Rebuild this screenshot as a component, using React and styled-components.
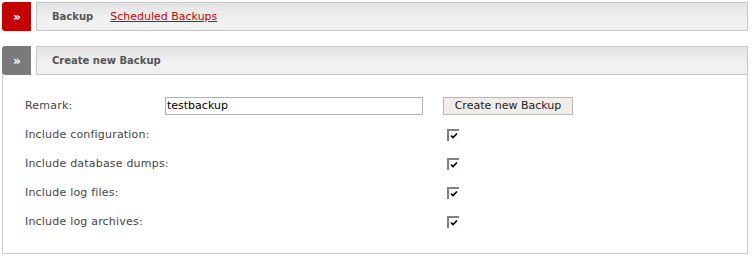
import React from 'react';
import styled, { createGlobalStyle } from 'styled-components';

const Global = createGlobalStyle`
    body {
        margin: 0;
        background: #fff;
        font-family: 'DejaVu Sans', Verdana, sans-serif;
        font-size: 11px;
        color: #444;
    }
`;

const Page = styled.div`
    display: flex;
    flex-direction: column;
    gap: 15px;
    padding: 2px 8px 0 2px;
    width: 746px;
`;

const Section = styled.div`
    display: flex;
    flex-direction: column;
`;

const Header = styled.div`
    display: flex;
    gap: 5px;
    height: 29px;
`;

const Tab = styled.div`
    width: 29px;
    height: 29px;
    flex: none;
    display: flex;
    align-items: center;
    justify-content: center;
    background: ${props => props.color};
    border-radius: 3px 0 0 3px;
    color: #fff;
    font-weight: bold;
    font-size: 12px;
    letter-spacing: -1px;
`;

const Bar = styled.div`
    flex: 1;
    display: flex;
    align-items: center;
    gap: 17px;
    padding-left: 15px;
    border: 1px solid #c8c8c8;
    background: linear-gradient(#e2e2e2, #f1f1f1 60%, #f0f0f0);
    font-weight: bold;
    font-size: 10px;
    color: #555;
`;

const TabLink = styled.a`
    color: #cc0000;
    font-weight: normal;
    font-size: 11px;
    text-decoration: underline;
`;

const Body = styled.div`
    border: 1px solid #cccccc;
    border-top: none;
    height: 179px;
    padding: 16px 0 0 22px;
    box-sizing: border-box;
`;

const Form = styled.div`
    display: grid;
    grid-template-columns: 140px 278px auto;
    grid-auto-rows: 29px;
    align-items: center;
`;

const Label = styled.span`
    color: #444;
    letter-spacing: 0.2px;
    white-space: nowrap;
`;

const Input = styled.input`
    width: 258px;
    height: 18px;
    box-sizing: border-box;
    border: 1px solid #b0b0b0;
    padding: 0 1px;
    font: 11px 'DejaVu Sans', Verdana, sans-serif;
    color: #000;
    outline: none;
`;

const Button = styled.button`
    justify-self: start;
    width: 130px;
    height: 18px;
    padding: 0;
    border: 1px solid #b8b8b8;
    background: #f0ede9;
    font: 11px 'DejaVu Sans', Verdana, sans-serif;
    color: #222;
`;

const Check = styled.span`
    justify-self: start;
    margin-left: 4px;
    width: 12px;
    height: 12px;
    box-sizing: border-box;
    border-top: 2px solid #808080;
    border-left: 2px solid #808080;
    background: #fbfbfb;
    display: flex;
    align-items: center;
    justify-content: center;
`;

const Checked = () => <Check>
    <svg width="8" height="7" viewBox="0 0 8 7">
        <path d="M1 3.5 L3 5.5 L7 1.5" stroke="#000" strokeWidth="1.6" fill="none" />
    </svg>
</Check>;

const options = [
    'Include configuration:',
    'Include database dumps:',
    'Include log files:',
    'Include log archives:'
];

const App = () => {
    return <Page>
        <Global />
        <Section>
            <Header>
                <Tab color="#c40000">»</Tab>
                <Bar>
                    <span>Backup</span>
                    <TabLink href="#">Scheduled Backups</TabLink>
                </Bar>
            </Header>
        </Section>
        <Section>
            <Header>
                <Tab color="#7a7a7a">»</Tab>
                <Bar>Create new Backup</Bar>
            </Header>
            <Body>
                <Form>
                    <Label>Remark:</Label>
                    <Input defaultValue="testbackup" />
                    <Button>Create new Backup</Button>
                    {options.map(o => <React.Fragment key={o}>
                        <Label>{o}</Label>
                        <span />
                        <Checked />
                    </React.Fragment>)}
                </Form>
            </Body>
        </Section>
    </Page>
}

export default App;
